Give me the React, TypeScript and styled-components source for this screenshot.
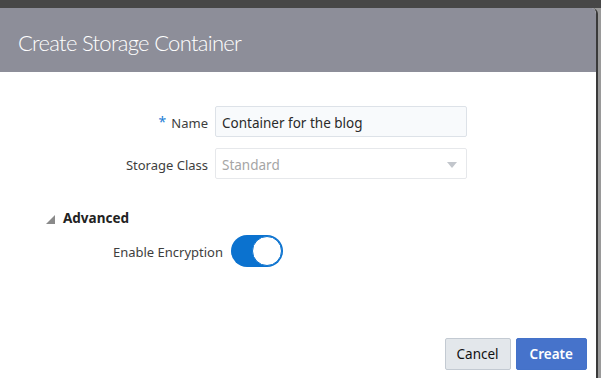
import React from "react";
import styled, { createGlobalStyle } from "styled-components";

const Global = createGlobalStyle`
  html, body { margin: 0; padding: 0; background: #474747; overflow: hidden; }
  body { font-family: "Noto Sans", "Open Sans", sans-serif; }
`;

const Page = styled.div`
  width: 601px;
  height: 378px;
  padding-top: 8px;
  box-sizing: border-box;
  display: flex;
  background: linear-gradient(#474747, #474747) top / 100% 8px no-repeat, #9a9a9a;
`;

const Dialog = styled.div`
  width: 596px;
  height: 370px;
  background: #ffffff;
  border-radius: 0 6px 0 0;
  overflow: hidden;
  display: flex;
  flex-direction: column;
  border-right: 2px solid #3a3a3a;
`;

const Header = styled.div`
  height: 64px;
  background: #8d8e99;
  display: flex;
  align-items: center;
  padding: 5px 0 0 18px;
  box-sizing: border-box;
`;

const Title = styled.h1`
  margin: 0;
  font-family: "Lato", "Open Sans", sans-serif;
  font-weight: 300;
  font-size: 22px;
  letter-spacing: -0.7px;
  color: #ffffff;
`;

const Body = styled.div`
  flex: 1;
  display: flex;
  flex-direction: column;
  padding-top: 34px;
`;

const FormGrid = styled.div`
  display: grid;
  grid-template-columns: 208px 252px;
  grid-auto-rows: 31px;
  column-gap: 7px;
  row-gap: 11px;
  align-items: center;
`;

const Label = styled.label<{ $shift?: number }>`
  justify-self: end;
  font-size: 13px;
  color: #3e3e3e;
  display: flex;
  align-items: center;
  gap: 5px;
  padding-top: ${(p) => p.$shift ?? 3}px;
`;

const Star = styled.span`
  color: #1f7fd6;
  font-size: 14px;
  position: relative;
  top: -2px;
`;

const Field = styled.div<{ $filled?: boolean }>`
  height: 31px;
  box-sizing: border-box;
  border: 1px solid ${(p) => (p.$filled ? "#dde2e8" : "#e6e8eb")};
  background: ${(p) => (p.$filled ? "#f8fafc" : "#ffffff")};
  border-radius: 2px;
  display: flex;
  align-items: center;
  justify-content: space-between;
  padding: 2px 8px 0 6px;
  font-size: 13.5px;
  color: ${(p) => (p.$filled ? "#2a2a2a" : "#a5a5a5")};
`;

const Caret = styled.span`
  width: 0;
  height: 0;
  border-left: 5px solid transparent;
  border-right: 5px solid transparent;
  border-top: 6px solid #c2c6cc;
  margin-right: 1px;
`;

const SectionHeader = styled.div`
  display: flex;
  align-items: center;
  gap: 8px;
  margin: 30px 0 0 46px;
  height: 18px;
  font-size: 13.5px;
  font-weight: 700;
  color: #222;
`;

const Corner = styled.span`
  width: 0;
  height: 0;
  border-left: 9px solid transparent;
  border-bottom: 9px solid #8a8a8a;
  margin-top: 2px;
`;

const SwitchRow = styled.div`
  display: grid;
  grid-template-columns: 223px auto;
  column-gap: 8px;
  align-items: center;
  margin-top: 8px;
`;

const Switch = styled.div<{ $on: boolean }>`
  width: 52px;
  height: 32px;
  box-sizing: border-box;
  border-radius: 16px;
  background: ${(p) => (p.$on ? "#0b72cf" : "#ccc")};
  display: flex;
  align-items: center;
  justify-content: ${(p) => (p.$on ? "flex-end" : "flex-start")};
  padding: 1px;
`;

const Knob = styled.span`
  width: 28px;
  height: 28px;
  border-radius: 50%;
  background: #fff;
  border: 1px solid #0b72cf;
`;

const FooterWrap = styled.div`
  flex: 1;
  display: flex;
  flex-direction: column;
  justify-content: flex-end;
  padding-bottom: 8px;
`;

const Footer = styled.div`
  display: flex;
  justify-content: flex-end;
  gap: 5px;
  padding-right: 9px;
`;

const Button = styled.button<{ $primary?: boolean }>`
  height: 32px;
  box-sizing: border-box;
  padding: ${(p) => (p.$primary ? "0 13px" : "0 11px")};
  border-radius: 2px;
  border: 1px solid ${(p) => (p.$primary ? "#4472c9" : "#c3cad2")};
  background: ${(p) => (p.$primary ? "#4673cb" : "#e3e7eb")};
  color: ${(p) => (p.$primary ? "#ffffff" : "#111")};
  font-family: "Noto Sans", "Open Sans", sans-serif;
  font-size: 13.5px;
  font-weight: ${(p) => (p.$primary ? 600 : 400)};
`;

export default function App() {
  return (
    <Page>
      <Global />
      <Dialog>
        <Header>
          <Title>Create Storage Container</Title>
        </Header>
        <Body>
          <FormGrid>
            <Label>
              <Star>*</Star>Name
            </Label>
            <Field $filled>Container for the blog</Field>
            <Label>Storage Class</Label>
            <Field>
              Standard
              <Caret />
            </Field>
          </FormGrid>
          <SectionHeader>
            <Corner />
            Advanced
          </SectionHeader>
          <SwitchRow>
            <Label $shift={1}>Enable Encryption</Label>
            <Switch $on>
              <Knob />
            </Switch>
          </SwitchRow>
          <FooterWrap>
            <Footer>
              <Button>Cancel</Button>
              <Button $primary>Create</Button>
            </Footer>
          </FooterWrap>
        </Body>
      </Dialog>
    </Page>
  );
}
